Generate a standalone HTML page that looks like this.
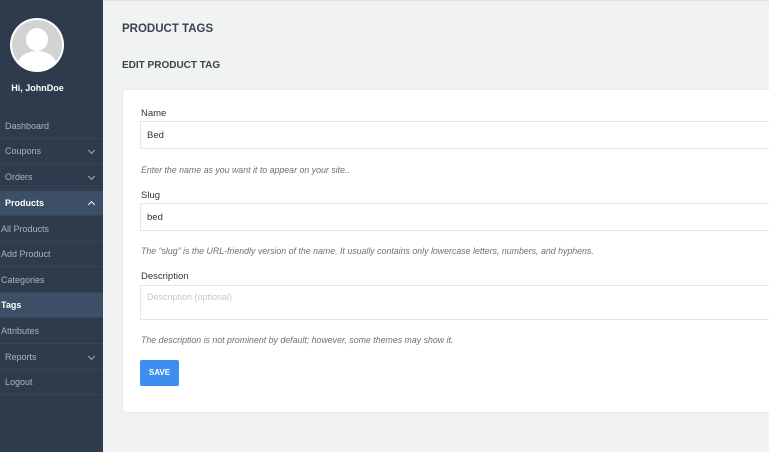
<!DOCTYPE html><html><head><style>
body{margin:0;width:769px;height:452px;overflow:hidden;background:#f1f3f3;font-family:"Liberation Sans",sans-serif;position:relative}
.sb{position:absolute;left:0;top:0;width:103px;height:452px;background:#2d3b4c}
.it{position:absolute;left:0;width:103px;height:25px;line-height:25px;font-size:9px;color:#aab4bf;border-bottom:1px solid #364556;box-sizing:border-box}
.it.act{background:#3d4f66;color:#fff;font-weight:bold}
.car{position:absolute;right:9px;top:9px;width:4px;height:4px;border-right:1px solid #aab4bf;border-bottom:1px solid #aab4bf;transform:rotate(45deg)}
.car.up{top:11px;transform:rotate(-135deg);border-color:#fff}
.t{position:absolute;font-size:9.5px;color:#333}
.inp{position:absolute;left:140px;width:640px;border:1px solid #e3e6e8;background:#fff;box-sizing:border-box;font-size:9.5px;color:#333;padding-left:6px}
.h{position:absolute;left:141px;font-size:8.8px;font-style:italic;color:#707070}
</style></head><body>
<div class="sb">
<div style="position:absolute;left:10px;top:18px;width:54px;height:54px;border-radius:50%;background:#fff;overflow:hidden">
<div style="position:absolute;left:2px;top:2px;width:50px;height:50px;border-radius:50%;background:#d3d3d3;overflow:hidden">
<div style="position:absolute;left:14px;top:8px;width:22px;height:23px;border-radius:50%;background:#fff"></div>
<div style="position:absolute;left:5px;top:31px;width:40px;height:30px;border-radius:50% 50% 0 0;background:#fff"></div></div></div>
<div style="position:absolute;left:0;width:75px;top:83px;text-align:center;color:#fff;font-weight:bold;font-size:9px">Hi, JohnDoe</div>
<div class="it" style="top:114px;padding-left:5px">Dashboard</div>
<div class="it" style="top:139px;padding-left:5px">Coupons<span class="car"></span></div>
<div class="it" style="top:165px;padding-left:5px">Orders<span class="car"></span></div>
<div class="it act" style="top:191px;padding-left:5px">Products<span class="car up"></span></div>
<div class="it" style="top:217px;padding-left:1px">All Products</div>
<div class="it" style="top:242px;padding-left:1px">Add Product</div>
<div class="it" style="top:268px;padding-left:1px">Categories</div>
<div class="it act" style="top:293px;padding-left:1px">Tags</div>
<div class="it" style="top:319px;padding-left:1px">Attributes</div>
<div class="it" style="top:345px;padding-left:5px">Reports<span class="car"></span></div>
<div class="it" style="top:370px;padding-left:5px">Logout</div>
</div>
<div style="position:absolute;left:103px;top:0;right:0;height:1px;background:#e0e3e5"></div>
<div style="position:absolute;left:122px;top:23px;font-size:11.5px;font-weight:bold;color:#3a4350">PRODUCT TAGS</div>
<div style="position:absolute;left:122px;top:60px;font-size:10px;font-weight:bold;color:#3a4350">EDIT PRODUCT TAG</div>
<div style="position:absolute;left:122px;top:89px;width:700px;height:324px;background:#fff;border:1px solid #e6e9ea;border-radius:5px;box-sizing:border-box"></div>
<div class="t" style="left:141px;top:108px">Name</div>
<div class="inp" style="top:121px;height:28px;line-height:27px">Bed</div>
<div class="h" style="top:165px">Enter the name as you want it to appear on your site..</div>
<div class="t" style="left:141px;top:190px">Slug</div>
<div class="inp" style="top:203px;height:28px;line-height:27px">bed</div>
<div class="h" style="top:246px">The “slug” is the URL-friendly version of the name. It usually contains only lowercase letters, numbers, and hyphens.</div>
<div class="t" style="left:141px;top:271px">Description</div>
<div class="inp" style="top:285px;height:35px;line-height:22px;color:#c5c8cb;font-size:9px">Description (optional)</div>
<div class="h" style="top:335px">The description is not prominent by default; however, some themes may show it.</div>
<div style="position:absolute;left:140px;top:360px;width:39px;height:26px;background:#3d8ef0;border-radius:2px;color:#fff;font-weight:bold;font-size:8px;text-align:center;line-height:26px">SAVE</div>
</body></html>
